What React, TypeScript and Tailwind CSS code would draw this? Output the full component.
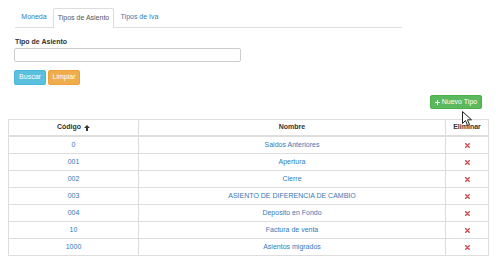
const rows = [
  { code: '0', name: 'Saldos Anteriores' },
  { code: '001', name: 'Apertura' },
  { code: '002', name: 'Cierre' },
  { code: '003', name: 'ASIENTO DE DIFERENCIA DE CAMBIO' },
  { code: '004', name: 'Deposito en Fondo' },
  { code: '10', name: 'Factura de venta' },
  { code: '1000', name: 'Asientos migrados' },
];

const RemoveIcon = () => (
  <svg width="5" height="5" viewBox="0 0 5 5">
    <path d="M0.8 0.8 L4.2 4.2 M4.2 0.8 L0.8 4.2" stroke="#d0484a" strokeWidth="1.4" strokeLinecap="square" />
  </svg>
);

const App = () => {
  return (
    <div className="relative w-[496px] h-[256px] overflow-hidden bg-white text-[7px] text-[#333] font-['Liberation_Sans',Arial,sans-serif]">
      {/* Tabs */}
      <div className="ml-[15px] mt-[8px] w-[387px] h-[20px] flex border-b border-[#ddd]">
        <div className="w-[38px] flex items-center justify-center text-[#337ab7]">Moneda</div>
        <div className="w-[61px] h-[20px] flex items-center justify-center bg-white border border-b-0 border-[#ddd] rounded-t-[2px] text-[#555]">
          Tipos de Asiento
        </div>
        <div className="w-[51px] flex items-center justify-center text-[#337ab7]">Tipos de Iva</div>
      </div>

      {/* Filter form */}
      <div className="pl-[14px] pt-[10px]">
        <div className="pl-[1px] font-bold leading-[8px]">Tipo de Asiento</div>
        <div className="mt-[2px] w-[227px] h-[14px] border border-[#ccc] rounded-[2px]"></div>
        <div className="mt-[8px] flex gap-[2px]">
          <button className="w-[32px] h-[15px] bg-[#5bc0de] text-white rounded-[2px] border border-[#46b8da] text-[7px]">Buscar</button>
          <button className="w-[32px] h-[15px] bg-[#f0ad4e] text-white rounded-[2px] border border-[#eea236] text-[7px]">Limpiar</button>
        </div>
      </div>

      {/* New button */}
      <div className="flex justify-end pr-[14px] mt-[10px]">
        <button className="w-[52px] h-[14px] bg-[#5cb85c] border border-[#4cae4c] text-white rounded-[2px] text-[7px] flex items-center justify-center gap-[2px]">
          <svg width="5" height="5" viewBox="0 0 5 5">
            <path d="M2 0 H3 V2 H5 V3 H3 V5 H2 V3 H0 V2 H2 Z" fill="white" />
          </svg>
          Nuevo Tipo
        </button>
      </div>

      {/* Table */}
      <div className="ml-[8px] mt-[10px] w-[481px] border border-[#ddd]">
        <div className="flex h-[17px] border-b-2 border-[#ddd] font-bold">
          <div className="w-[130px] flex items-center justify-center gap-[3px] border-r border-[#ddd]">
            Código
            <svg width="6" height="6" viewBox="0 0 6 6">
              <path d="M3 0 L6 3 H4 V6 H2 V3 H0 Z" fill="#333" />
            </svg>
          </div>
          <div className="w-[307px] flex items-center justify-center border-r border-[#ddd]">Nombre</div>
          <div className="flex-1 flex items-center justify-center">Eliminar</div>
        </div>
        {rows.map((r) => (
          <div key={r.code} className="flex h-[17px] border-b border-[#ddd] text-[#337ab7]">
            <div className="w-[130px] flex items-center justify-center border-r border-[#ddd]">{r.code}</div>
            <div className="w-[307px] flex items-center justify-center border-r border-[#ddd]">{r.name}</div>
            <div className="flex-1 flex items-center justify-center">
              <RemoveIcon />
            </div>
          </div>
        ))}
      </div>

      {/* Mouse cursor */}
      <svg className="absolute left-[462px] top-[111px]" width="10" height="16" viewBox="0 0 10 16">
        <path d="M0.5 0.5 L0.5 12.5 L3.5 9.5 L5.5 14.5 L7.5 13.5 L5.5 8.8 L9.5 8.8 Z" fill="white" stroke="#222" strokeWidth="1" strokeLinejoin="round" />
      </svg>
    </div>
  );
};

export default App;
